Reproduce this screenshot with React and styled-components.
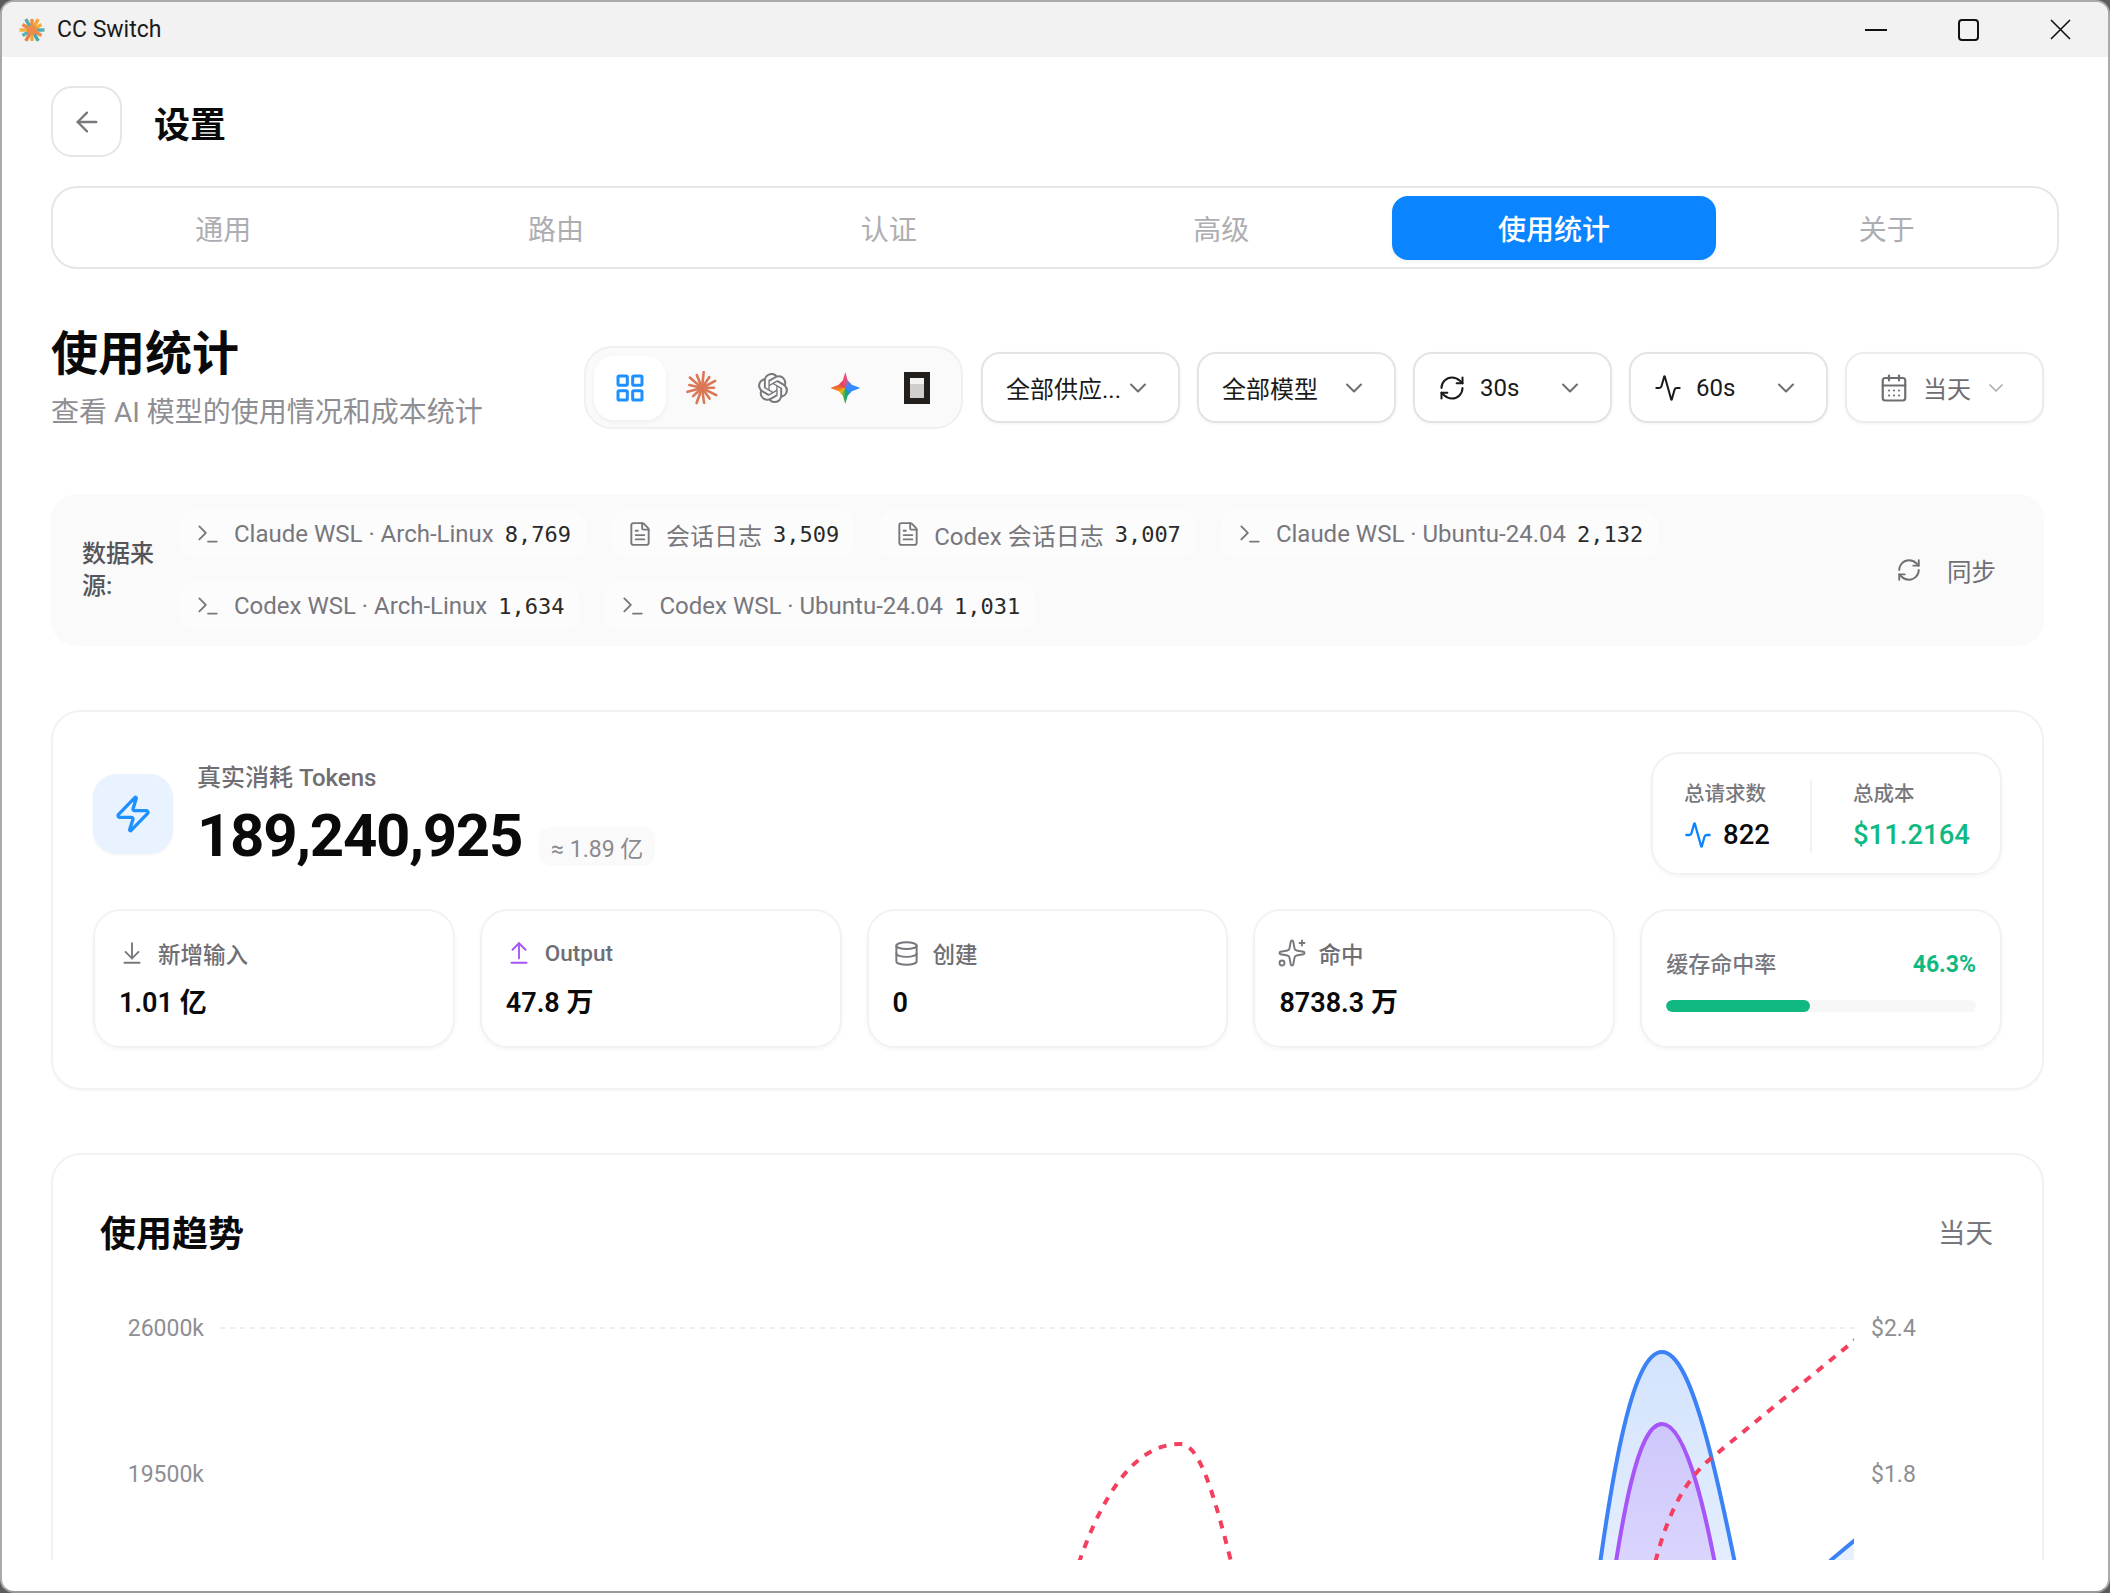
import React from 'react';
import styled, { createGlobalStyle } from 'styled-components';
import {
  Activity,
  ArrowDownToLine,
  ArrowLeft,
  ArrowUpFromLine,
  CalendarDays,
  ChevronDown,
  Database,
  FileText,
  LayoutGrid,
  RefreshCw,
  Sparkles,
  Terminal,
  Zap,
} from 'lucide-react';
import { SiOpenai } from 'react-icons/si';

const GlobalStyle = createGlobalStyle`
  html, body {
    margin: 0;
    padding: 0;
    background: #5c5c5c;
    font-family: Roboto, "Noto Sans CJK SC", sans-serif;
  }
  * { box-sizing: border-box; }
`;

const Window = styled.div`
  width: 2110px;
  height: 1593px;
  border: 2px solid #aaaaaa;
  border-bottom-color: #999999;
  border-radius: 14px;
  background: #ffffff;
  overflow: hidden;
  display: flex;
  flex-direction: column;
`;

const TitleBar = styled.div`
  height: 55px;
  flex: none;
  background: #f2f2f2;
  display: flex;
  align-items: center;
  padding-left: 17px;
`;

const AppName = styled.span`
  margin-left: 12px;
  font-size: 23px;
  color: #1a1a1a;
`;

const WindowControls = styled.div`
  margin-left: auto;
  display: flex;
  align-items: center;
  padding-right: 37px;
  gap: 71px;
  color: #111;
`;

const Scroller = styled.div`
  height: 1503px;
  flex: none;
  overflow: hidden;
  padding: 29px 49px 0;
`;

const PageHeader = styled.div`
  display: flex;
  align-items: center;
  gap: 32px;
`;

const BackButton = styled.div`
  width: 71px;
  height: 71px;
  border: 2px solid #e6e6e6;
  border-radius: 21px;
  display: flex;
  align-items: center;
  justify-content: center;
  color: #77777d;
`;

const PageTitle = styled.h1`
  margin: 0;
  font-size: 36px;
  font-weight: 700;
  color: #0a0a0a;
`;

const Tabs = styled.div`
  margin-top: 29px;
  height: 83px;
  border: 2px solid #e6e6e6;
  border-radius: 26px;
  padding: 8px;
  display: flex;
  gap: 8px;
`;

const Tab = styled.div`
  width: 325px;
  height: 64px;
  border-radius: 16px;
  display: flex;
  align-items: center;
  justify-content: center;
  font-size: 28px;
  font-weight: ${(p) => (p.$active ? 500 : 400)};
  color: ${(p) => (p.$active ? '#ffffff' : '#aeaeb2')};
  background: ${(p) => (p.$active ? '#0a84ff' : 'transparent')};
  box-shadow: ${(p) => (p.$active ? '0 2px 4px rgba(0,0,0,0.06)' : 'none')};
`;

const Content = styled.div`
  padding-right: 15px;
`;

const Toolbar = styled.div`
  margin-top: 60px;
  display: flex;
  align-items: flex-end;
  justify-content: space-between;
`;

const Heading = styled.div`
  display: flex;
  flex-direction: column;
`;

const HeadingTitle = styled.h2`
  margin: 0;
  font-size: 47px;
  line-height: 50px;
  font-weight: 700;
  color: #0a0a0a;
`;

const HeadingSub = styled.p`
  margin: 15px 0 0;
  font-size: 28px;
  line-height: 38px;
  color: #8e8e93;
`;

const Filters = styled.div`
  display: flex;
  align-items: center;
  gap: 17px;
  padding-bottom: 3px;
`;

const AppSwitch = styled.div`
  display: flex;
  width: 379px;
  height: 83px;
  margin-right: 1px;
  padding: 8px;
  border: 2px solid #f0f0f0;
  border-radius: 28px;
  background: #fafafa;
`;

const AppSwitchItem = styled.div`
  width: 72px;
  height: 64px;
  border-radius: 20px;
  display: flex;
  align-items: center;
  justify-content: center;
  background: ${(p) => (p.$active ? '#ffffff' : 'transparent')};
  box-shadow: ${(p) => (p.$active ? '0 2px 4px rgba(0,0,0,0.05)' : 'none')};
  color: ${(p) => (p.$active ? '#1e90ff' : '#77777d')};
`;

const GeminiMark = styled.div`
  width: 30px;
  height: 32px;
  background: conic-gradient(from 315deg, #e8435a 0deg, #e94d77 50deg, #3d88f8 95deg, #2f8cf6 170deg, #12a86b 215deg, #f2b90f 270deg, #ec6a2d 320deg, #e8435a 360deg);
  clip-path: polygon(50% 0, 58% 26%, 72% 40%, 100% 50%, 72% 60%, 58% 74%, 50% 100%, 42% 74%, 28% 60%, 0 50%, 28% 40%, 42% 26%);
`;

const Dropdown = styled.div`
  width: 199px;
  height: 71px;
  border: 2px solid ${(p) => (p.$muted ? '#ececec' : '#e4e4e4')};
  border-radius: 19px;
  background: #ffffff;
  box-shadow: 0 1px 3px rgba(0, 0, 0, 0.06);
  display: flex;
  align-items: center;
  padding: ${(p) => (p.$muted ? '0 34px 0 32px' : '0 26px 0 23px')};
  font-size: 24px;
  white-space: nowrap;
  color: ${(p) => (p.$muted ? '#6e6e73' : '#1a1a1a')};
  svg {
    flex: none;
  }
  svg:first-child:not(:last-child) {
    margin-right: 14px;
  }
  svg:last-child {
    margin-left: auto;
    color: ${(p) => (p.$muted ? '#aeaeb2' : '#6e6e73')};
  }
`;

const SourcePanel = styled.div`
  margin-top: 62px;
  height: 152px;
  border-radius: 26px;
  background: #fafafa;
  padding: 16px 48px 16px 31px;
  display: flex;
  align-items: center;
`;

const SourceLabel = styled.div`
  width: 75px;
  flex: none;
  margin-right: 22px;
  font-size: 24px;
  line-height: 32px;
  font-weight: 500;
  color: #55555a;
`;

const SourceList = styled.div`
  flex: 1;
  max-width: 1600px;
  display: flex;
  flex-wrap: wrap;
  gap: 24px 25px;
`;

const SourcePill = styled.div`
  height: 48px;
  border-radius: 16px;
  background: #fcfcfc;
  padding: 0 15px 0 16px;
  display: flex;
  align-items: center;
  gap: 13px;
  font-size: 24px;
  color: #77777d;
`;

const SourceCount = styled.span`
  margin-left: -2px;
  font-family: "DejaVu Sans Mono", monospace;
  font-size: 22px;
  color: #2a2a2a;
`;

const SyncButton = styled.div`
  margin-left: auto;
  display: flex;
  align-items: center;
  gap: 25px;
  font-size: 24.5px;
  color: #6e6e73;
`;

const Card = styled.section`
  border: 2px solid #f2f2f2;
  border-radius: 30px;
  background: #ffffff;
  box-shadow: 0 1px 3px rgba(0, 0, 0, 0.03);
`;

const TokenCard = styled(Card)`
  margin-top: 64px;
  height: 380px;
  padding: 40px 40px 0;
`;

const HeroRow = styled.div`
  display: flex;
  align-items: center;
  justify-content: space-between;
`;

const HeroLeft = styled.div`
  display: flex;
  align-items: center;
  gap: 24px;
`;

const BoltTile = styled.div`
  width: 80px;
  height: 80px;
  border-radius: 24px;
  background: #e8f3ff;
  box-shadow: 0 1px 3px rgba(0, 0, 0, 0.05);
  display: flex;
  align-items: center;
  justify-content: center;
  color: #1e90ff;
`;

const HeroText = styled.div`
  display: flex;
  flex-direction: column;
  padding-top: 9px;
`;

const HeroLabel = styled.div`
  font-size: 24px;
  line-height: 34px;
  font-weight: 500;
  color: #6e6e73;
`;

const HeroValueRow = styled.div`
  margin-top: 2px;
  display: flex;
  align-items: flex-end;
  gap: 17px;
`;

const HeroValue = styled.div`
  font-size: 60px;
  line-height: 78px;
  font-weight: 700;
  letter-spacing: -1.3px;
  color: #0a0a0a;
`;

const ApproxPill = styled.div`
  height: 39px;
  margin-bottom: 9px;
  padding: 0 12px;
  border-radius: 12px;
  background: #fafafa;
  display: flex;
  align-items: center;
  font-size: 23px;
  color: #8a8a8f;
`;

const Summary = styled.div`
  width: 351px;
  height: 123px;
  border: 2px solid #f2f2f2;
  border-radius: 28px;
  box-shadow: 0 2px 4px rgba(0, 0, 0, 0.04);
  padding: 6px 31px 0;
  display: flex;
  align-items: center;
`;

const SummaryColumn = styled.div`
  display: flex;
  flex-direction: column;
  gap: 9px;
  padding-right: 40px;
  & + & {
    padding: 0 0 0 41px;
    border-left: 2px solid #f2f2f2;
  }
`;

const SummaryLabel = styled.div`
  font-size: 20.5px;
  line-height: 28px;
  font-weight: 500;
  color: #77777d;
`;

const SummaryValue = styled.div`
  display: flex;
  align-items: center;
  gap: 11px;
  font-size: 27.5px;
  line-height: 36px;
  font-weight: 500;
  color: ${(p) => p.$color || '#0a0a0a'};
`;

const StatGrid = styled.div`
  margin-top: 34px;
  display: grid;
  grid-template-columns: repeat(5, 1fr);
  gap: 25px;
`;

const StatBox = styled.div`
  height: 139px;
  border: 2px solid #f2f2f2;
  border-radius: 28px;
  box-shadow: 0 2px 4px rgba(0, 0, 0, 0.04);
  padding: 25px 24px 0;
`;

const StatLabel = styled.div`
  height: 34px;
  display: flex;
  align-items: center;
  gap: ${(p) => (p.$pull ? '11px' : '13px')};
  margin-left: ${(p) => (p.$pull ? '-2px' : '0')};
  font-size: 22.5px;
  font-weight: 500;
  color: #6e6e73;
`;

const StatValue = styled.div`
  margin-top: 15px;
  font-size: 27px;
  line-height: 36px;
  font-weight: 600;
  color: #0a0a0a;
`;

const CacheHead = styled.div`
  margin-top: 14px;
  display: flex;
  align-items: center;
  justify-content: space-between;
  font-size: 22px;
  line-height: 30px;
  font-weight: 500;
  color: #77777d;
`;

const CacheRate = styled.span`
  font-weight: 700;
  font-size: 23px;
  color: #10b981;
`;

const CacheTrack = styled.div`
  margin-top: 20px;
  height: 12px;
  border-radius: 6px;
  background: #f7f7f7;
  overflow: hidden;
`;

const CacheFill = styled.div`
  height: 100%;
  border-radius: 6px;
  background: #10b981;
`;

const TrendCard = styled(Card)`
  margin-top: 63px;
  padding: 54px 49px 0 47px;
`;

const TrendHeader = styled.div`
  height: 44px;
  display: flex;
  align-items: center;
  justify-content: space-between;
`;

const TrendTitle = styled.h3`
  margin: 0;
  font-size: 36px;
  font-weight: 700;
  color: #0a0a0a;
`;

const TrendRange = styled.span`
  font-size: 27.5px;
  color: #77777d;
`;

const ChartSvg = styled.svg`
  display: block;
  margin-top: 37px;
  text {
    font-family: Roboto, "Noto Sans CJK SC", sans-serif;
    font-size: 23px;
    fill: #8e8e93;
  }
`;

function BurstLogo() {
  const colors = ['#e8913f', '#f4a63a', '#f0b23c', '#58aeb0', '#f08a4b', '#4aa6a8', '#f4a63a', '#ea7f45', '#5bb1b3', '#f3b041', '#ee8648', '#54a9ac'];
  return (
    <svg width="26" height="26" viewBox="-13 -13 26 26">
      {colors.map((c, i) => (
        <line
          key={i}
          x1="0"
          y1="0"
          x2="0"
          y2={i % 2 ? -12.5 : -11}
          stroke={c}
          strokeWidth="3.4"
          transform={`rotate(${i * 30})`}
        />
      ))}
      <circle r="5" fill="#f08a4b" />
    </svg>
  );
}

function ClaudeMark() {
  const rays = [16, 13, 15, 12, 16, 13, 15, 16, 12, 15, 13, 16, 14];
  return (
    <svg width="34" height="34" viewBox="-17 -17 34 34">
      {rays.map((r, i) => (
        <line
          key={i}
          x1="0"
          y1="0"
          x2="0"
          y2={-r}
          stroke="#d97757"
          strokeWidth="2.6"
          strokeLinecap="round"
          transform={`rotate(${(i * 360) / rays.length + 6})`}
        />
      ))}
    </svg>
  );
}

function DeviceMark() {
  return (
    <svg width="26" height="32" viewBox="0 0 26 32">
      <rect width="26" height="32" fill="#231f1c" />
      <rect x="6" y="6" width="14" height="20" fill="#cfcecb" />
      <rect x="6" y="6" width="14" height="6" fill="#f2f2f2" />
    </svg>
  );
}

const tabs = ['通用', '路由', '认证', '高级', '使用统计', '关于'];

const sources = [
  { kind: 'wsl', name: 'Claude WSL · Arch-Linux', count: '8,769' },
  { kind: 'log', name: '会话日志', count: '3,509' },
  { kind: 'log', name: 'Codex 会话日志', count: '3,007' },
  { kind: 'wsl', name: 'Claude WSL · Ubuntu-24.04', count: '2,132' },
  { kind: 'wsl', name: 'Codex WSL · Arch-Linux', count: '1,634' },
  { kind: 'wsl', name: 'Codex WSL · Ubuntu-24.04', count: '1,031' },
];

const stats = [
  { icon: <ArrowDownToLine size={26} strokeWidth={1.75} color="#77777d" />, label: '新增输入', value: '1.01 亿' },
  { icon: <ArrowUpFromLine size={26} strokeWidth={1.75} color="#a855f7" />, label: 'Output', value: '47.8 万' },
  { icon: <Database size={27} strokeWidth={1.75} color="#77777d" />, label: '创建', value: '0' },
  { icon: <Sparkles size={30} strokeWidth={1.5} color="#77777d" />, label: '命中', value: '8738.3 万', pull: true },
];

export default function App() {
  return (
    <>
      <GlobalStyle />
      <Window>
        <TitleBar>
          <BurstLogo />
          <AppName>CC Switch</AppName>
          <WindowControls>
            <svg width="22" height="4" viewBox="0 0 22 4">
              <rect width="22" height="2" y="1" fill="#111" />
            </svg>
            <svg width="21" height="22" viewBox="0 0 21 22">
              <rect x="1" y="1" width="19" height="20" rx="3" fill="none" stroke="#111" strokeWidth="2" />
            </svg>
            <svg width="21" height="21" viewBox="0 0 21 21">
              <path d="M1 1 L20 20 M20 1 L1 20" stroke="#111" strokeWidth="1.6" fill="none" />
            </svg>
          </WindowControls>
        </TitleBar>
        <Scroller>
          <PageHeader>
            <BackButton>
              <ArrowLeft size={32} strokeWidth={1.75} />
            </BackButton>
            <PageTitle>设置</PageTitle>
          </PageHeader>
          <Tabs>
            {tabs.map((t) => (
              <Tab key={t} $active={t === '使用统计'}>
                {t}
              </Tab>
            ))}
          </Tabs>
          <Content>
            <Toolbar>
              <Heading>
                <HeadingTitle>使用统计</HeadingTitle>
                <HeadingSub>查看 AI 模型的使用情况和成本统计</HeadingSub>
              </Heading>
              <Filters>
                <AppSwitch>
                  <AppSwitchItem $active>
                    <LayoutGrid size={32} strokeWidth={2.25} />
                  </AppSwitchItem>
                  <AppSwitchItem>
                    <ClaudeMark />
                  </AppSwitchItem>
                  <AppSwitchItem>
                    <SiOpenai size={30} />
                  </AppSwitchItem>
                  <AppSwitchItem>
                    <GeminiMark />
                  </AppSwitchItem>
                  <AppSwitchItem>
                    <DeviceMark />
                  </AppSwitchItem>
                </AppSwitch>
                <Dropdown>
                  全部供应...
                  <ChevronDown size={28} strokeWidth={1.75} />
                </Dropdown>
                <Dropdown>
                  全部模型
                  <ChevronDown size={28} strokeWidth={1.75} />
                </Dropdown>
                <Dropdown>
                  <RefreshCw size={28} strokeWidth={1.75} />
                  30s
                  <ChevronDown size={28} strokeWidth={1.75} />
                </Dropdown>
                <Dropdown>
                  <Activity size={28} strokeWidth={1.75} />
                  60s
                  <ChevronDown size={28} strokeWidth={1.75} />
                </Dropdown>
                <Dropdown $muted>
                  <CalendarDays size={30} strokeWidth={1.75} />
                  当天
                  <ChevronDown size={24} strokeWidth={1.75} />
                </Dropdown>
              </Filters>
            </Toolbar>

            <SourcePanel>
              <SourceLabel>数据来源:</SourceLabel>
              <SourceList>
                {sources.map((s) => (
                  <SourcePill key={s.name}>
                    {s.kind === 'wsl' ? (
                      <Terminal size={26} strokeWidth={1.75} />
                    ) : (
                      <FileText size={26} strokeWidth={1.75} />
                    )}
                    <span>{s.name}</span>
                    <SourceCount>{s.count}</SourceCount>
                  </SourcePill>
                ))}
              </SourceList>
              <SyncButton>
                <RefreshCw size={26} strokeWidth={1.75} />
                同步
              </SyncButton>
            </SourcePanel>

            <TokenCard>
              <HeroRow>
                <HeroLeft>
                  <BoltTile>
                    <Zap size={40} strokeWidth={2} />
                  </BoltTile>
                  <HeroText>
                    <HeroLabel>真实消耗 Tokens</HeroLabel>
                    <HeroValueRow>
                      <HeroValue>189,240,925</HeroValue>
                      <ApproxPill>≈ 1.89 亿</ApproxPill>
                    </HeroValueRow>
                  </HeroText>
                </HeroLeft>
                <Summary>
                  <SummaryColumn>
                    <SummaryLabel>总请求数</SummaryLabel>
                    <SummaryValue>
                      <Activity size={28} strokeWidth={2} color="#0a84ff" />
                      822
                    </SummaryValue>
                  </SummaryColumn>
                  <SummaryColumn>
                    <SummaryLabel>总成本</SummaryLabel>
                    <SummaryValue $color="#10b981">$11.2164</SummaryValue>
                  </SummaryColumn>
                </Summary>
              </HeroRow>
              <StatGrid>
                {stats.map((s) => (
                  <StatBox key={s.label}>
                    <StatLabel $pull={s.pull}>
                      {s.icon}
                      {s.label}
                    </StatLabel>
                    <StatValue>{s.value}</StatValue>
                  </StatBox>
                ))}
                <StatBox>
                  <CacheHead>
                    缓存命中率
                    <CacheRate>46.3%</CacheRate>
                  </CacheHead>
                  <CacheTrack>
                    <CacheFill style={{ width: '46.3%' }} />
                  </CacheTrack>
                </StatBox>
              </StatGrid>
            </TokenCard>

            <TrendCard>
              <TrendHeader>
                <TrendTitle>使用趋势</TrendTitle>
                <TrendRange>当天</TrendRange>
              </TrendHeader>
              <ChartSvg width="1893" height="420" viewBox="100 1290 1893 420">
                <defs>
                  <linearGradient id="blueFill" x1="0" y1="0" x2="0" y2="1">
                    <stop offset="0" stopColor="#3b82f6" stopOpacity="0.22" />
                    <stop offset="1" stopColor="#3b82f6" stopOpacity="0.1" />
                  </linearGradient>
                  <linearGradient id="purpleFill" x1="0" y1="0" x2="0" y2="1">
                    <stop offset="0" stopColor="#a855f7" stopOpacity="0.22" />
                    <stop offset="1" stopColor="#a855f7" stopOpacity="0.12" />
                  </linearGradient>
                  <clipPath id="plotArea">
                    <rect x="220" y="1300" width="1634" height="420" />
                  </clipPath>
                </defs>
                <line x1="220" y1="1328" x2="1855" y2="1328" stroke="#eeeeee" strokeWidth="2" strokeDasharray="5 5" />
                <text x="204" y="1336" textAnchor="end">26000k</text>
                <text x="204" y="1482" textAnchor="end">19500k</text>
                <text x="1871" y="1336">$2.4</text>
                <text x="1871" y="1482">$1.8</text>
                <g clipPath="url(#plotArea)">
                  <path
                    d="M1585 1680 C1610 1470 1632 1352 1662 1352 C1692 1352 1718 1470 1758 1680 Z"
                    fill="url(#blueFill)"
                    stroke="none"
                  />
                  <path
                    d="M1585 1680 C1610 1470 1632 1352 1662 1352 C1692 1352 1718 1470 1758 1680"
                    fill="none"
                    stroke="#3b82f6"
                    strokeWidth="4"
                  />
                  <path
                    d="M1603 1650 C1622 1510 1638 1424 1662 1424 C1686 1424 1708 1510 1730 1650 Z"
                    fill="url(#purpleFill)"
                    stroke="none"
                  />
                  <path
                    d="M1603 1650 C1622 1510 1638 1424 1662 1424 C1686 1424 1708 1510 1730 1650"
                    fill="none"
                    stroke="#a855f7"
                    strokeWidth="4"
                  />
                  <path d="M1810 1590 L1831 1560 L1860 1534 L1860 1600 Z" fill="#3b82f6" fillOpacity="0.12" />
                  <path d="M1810 1590 L1831 1560 L1860 1536" fill="none" stroke="#3b82f6" strokeWidth="4" />
                  <path
                    d="M1057 1640 C1085 1520 1125 1444 1180 1444 C1205 1444 1220 1520 1251 1640"
                    fill="none"
                    stroke="#f43f5e"
                    strokeWidth="4"
                    strokeDasharray="8 8"
                  />
                  <path
                    d="M1640 1640 C1655 1540 1675 1490 1709 1460 L1860 1336"
                    fill="none"
                    stroke="#f43f5e"
                    strokeWidth="4"
                    strokeDasharray="8 8"
                  />
                </g>
              </ChartSvg>
            </TrendCard>
          </Content>
        </Scroller>
      </Window>
    </>
  );
}
